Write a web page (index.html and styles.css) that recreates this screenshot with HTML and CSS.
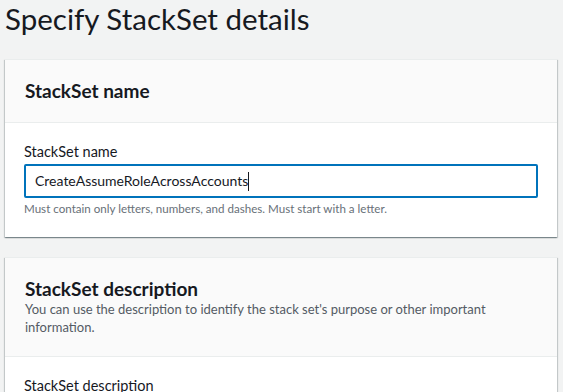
FILE: index.html
```html
<!DOCTYPE html>
<html lang="en">
<head>
    <meta charset="UTF-8">
    <meta name="viewport" content="width=device-width, initial-scale=1.0">
    <title>Specify StackSet details</title>
    <link rel="stylesheet" href="styles.css">
</head>
<body>
<div class="page">
    <h1>Specify StackSet details</h1>

    <div class="card">
        <div class="card-header">
            <h2>StackSet name</h2>
        </div>
        <div class="card-body">
            <label class="field-label">StackSet name</label>
            <div class="text-input focused">CreateAssumeRoleAcrossAccounts<span class="caret"></span></div>
            <p class="hint">Must contain only letters, numbers, and dashes. Must start with a letter.</p>
        </div>
    </div>

    <div class="card">
        <div class="card-header">
            <h2>StackSet description</h2>
            <p class="card-desc">You can use the description to identify the stack set's purpose or other important information.</p>
        </div>
        <div class="card-body">
            <label class="field-label">StackSet description</label>
        </div>
    </div>
</div>
</body>
</html>
```

FILE: styles.css
```css
body {
    margin: 0;
    background-color: #f2f3f3;
    color: #16191f;
    font-family: Lato, "Open Sans", Arial, sans-serif;
    font-size: 14px;
}
.page {
    padding: 0 6px 0 5px;
}
h1 {
    margin: 0 0 21px 0;
    font-size: 29.5px;
    font-weight: normal;
    line-height: 38px;
}
.card {
    background-color: #fff;
    border-top: 1px solid #eaeded;
    box-shadow: 0 1px 1px 0 rgba(0, 28, 36, 0.3), 1px 1px 1px 0 rgba(0, 28, 36, 0.15), -1px 1px 1px 0 rgba(0, 28, 36, 0.15);
    margin-bottom: 20px;
}
.card-header {
    background-color: #fafafa;
    border-bottom: 1px solid #eaeded;
    padding: 20px;
}
.card-header h2 {
    margin: 0;
    font-size: 19px;
    font-weight: bold;
    line-height: 22px;
}
.card-desc {
    margin: 0;
    width: 480px;
    color: #545b64;
    font-size: 13px;
    line-height: 18px;
}
.card-body {
    padding: 18px 19px 20px 19px;
}
.field-label {
    display: block;
    font-size: 14.5px;
    line-height: 21px;
    margin-bottom: 2px;
}
.text-input {
    height: 30px;
    line-height: 30px;
    padding: 0 9px;
    border: 1px solid #aab7b8;
    border-radius: 2px;
    font-size: 14px;
}
.text-input.focused {
    border: 2px solid #0073bb;
}
.caret {
    display: inline-block;
    width: 1px;
    height: 19px;
    background-color: #16191f;
    vertical-align: -5px;
}
.hint {
    margin: 3px 0 0 0;
    color: #687078;
    font-size: 11.6px;
    line-height: 16px;
}
```
